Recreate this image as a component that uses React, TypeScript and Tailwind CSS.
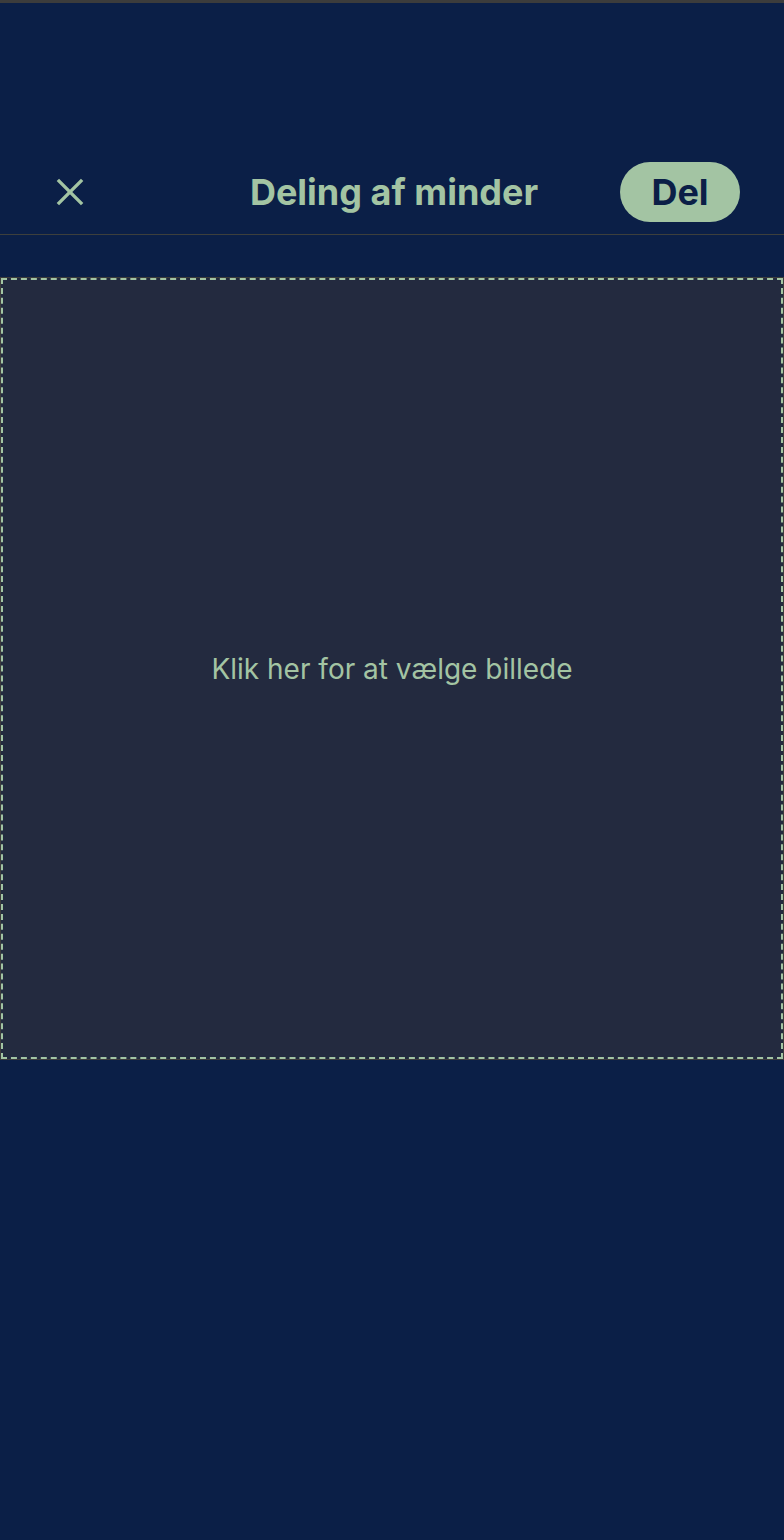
export default function App() {
  return (
    <div
      className="min-h-[1540px] w-full bg-[#0b1f47] flex flex-col"
      style={{ fontFamily: 'Inter, "Liberation Sans", sans-serif' }}
    >
      <div className="h-[3px] bg-[#3c3c3c]" />
      <header className="flex items-center justify-between pt-[159px] pb-[12px] pl-[56px] pr-[44px] border-b border-[#3d3f3c]">
        <button className="w-[28px] h-[28px] flex items-center justify-center text-[#a3c4a3]">
          <svg width="30" height="30" viewBox="0 0 30 30" fill="none" stroke="currentColor" strokeWidth="3.6">
            <path d="M2 2 L28 28 M28 2 L2 28" />
          </svg>
        </button>
        <h1 className="text-[36px] font-bold text-[#a3c4a3] leading-none ml-[84px]">Deling af minder</h1>
        <button className="w-[120px] h-[60px] rounded-full bg-[#a3c4a3] text-[#0b1f47] text-[36px] font-bold leading-none">
          Del
        </button>
      </header>
      <div className="mt-[42px] border border-[#3c3c3c]">
        <div className="h-[781px] border-2 border-dashed border-[#a3c4a3] bg-[#232a3f] flex items-center justify-center">
          <p className="text-[28px] text-[#a3c4a3]">Klik her for at vælge billede</p>
        </div>
      </div>
    </div>
  )
}
